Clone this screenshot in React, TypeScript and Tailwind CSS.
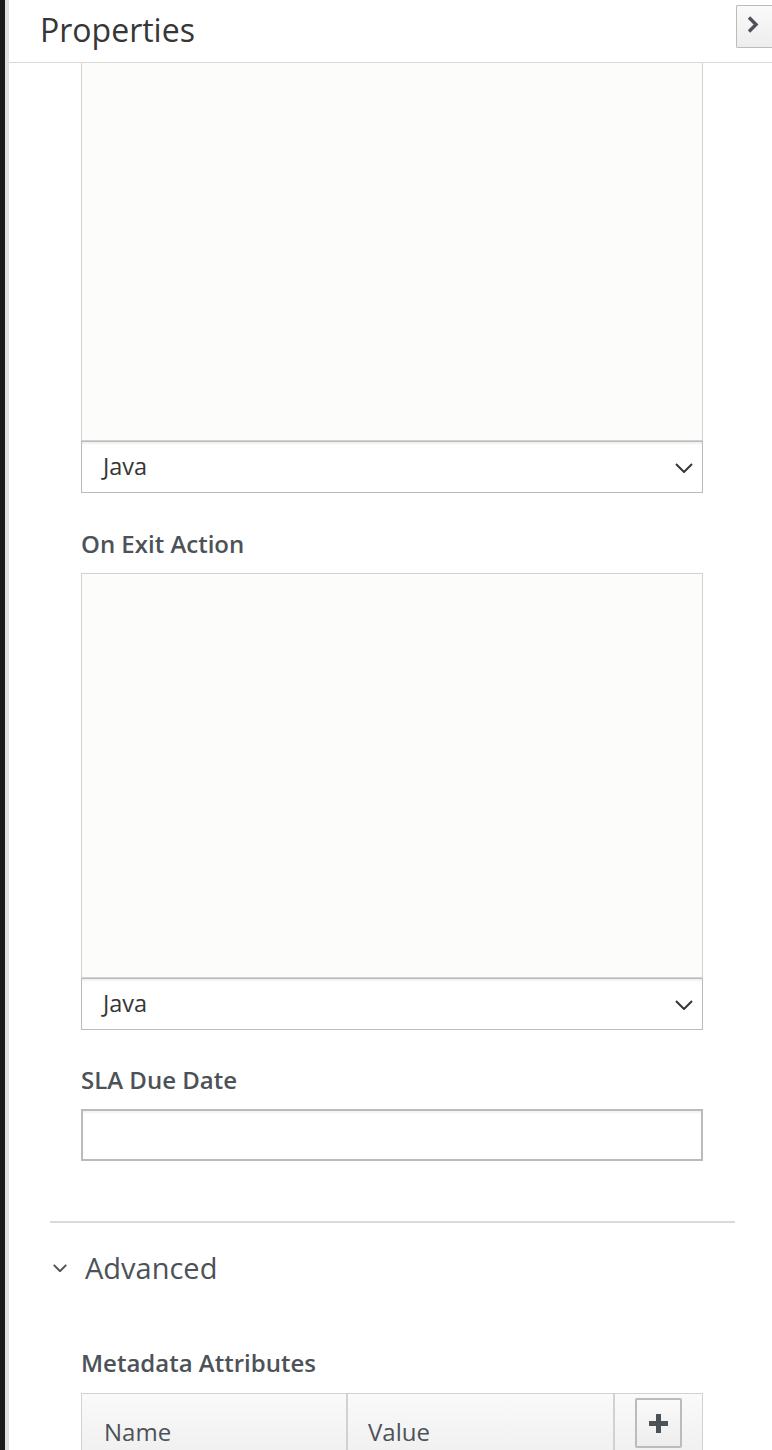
import React from 'react';

const Chevron = ({ className, width = 1.8 }: { className?: string; width?: number }) => (
  <svg viewBox="0 0 18 10" className={className} fill="none" stroke="currentColor" strokeWidth={width}>
    <path d="M1 1l8 8 8-8" />
  </svg>
);

const Label = ({ children, className = '' }: { children: React.ReactNode; className?: string }) => (
  <div className={`text-[24px] leading-[28px] font-semibold text-[#4d5258] ${className}`}>{children}</div>
);

const LangSelect = () => (
  <div className="relative flex h-[52px] w-[622px] items-center border border-[#bbbbbb] bg-white pl-[21px] text-[23.5px] text-[#363636] shadow-[inset_0_2px_2px_rgba(0,0,0,0.06)]">
    Java
    <Chevron className="absolute right-[9px] top-[21px] h-[10px] w-[18px] text-[#363636]" width={2} />
  </div>
);

const App: React.FC = () => {
  return (
    <div className="flex min-h-[1450px] w-[772px] overflow-hidden bg-white font-['Open_Sans',sans-serif]">
      <div className="w-[5px] shrink-0 bg-[#1b1b1b]" />
      <div className="w-[4px] shrink-0 bg-[#e0e0e0]" />
      <div className="flex flex-1 flex-col">
        {/* header */}
        <div className="flex h-[63px] items-start justify-between border-b border-[#d9d9d9]">
          <h1 className="pl-[31px] pt-[9px] text-[32px] leading-[42px] text-[#363636]">Properties</h1>
          <button className="mt-[5px] flex h-[43px] w-[36px] items-start justify-center rounded-l-[2px] border border-r-0 border-[#bbbbbb] bg-gradient-to-b from-[#fafafa] to-[#ededed] pr-[4px] pt-[9px] text-[#4d5258]">
            <svg viewBox="0 0 13 19" className="h-[19px] w-[13px]" fill="none" stroke="currentColor" strokeWidth={3.4}>
              <path d="M3 2.5l7 7-7 7" />
            </svg>
          </button>
        </div>

        <div className="flex flex-col pl-[72px]">
          <div className="h-[378px] w-[622px] border-x border-b border-[#d1d1d1] bg-[#fcfcfa]" />
          <LangSelect />

          <Label className="mt-[37px]">On Exit Action</Label>
          <div className="mt-[15px] h-[405px] w-[622px] border border-[#d1d1d1] bg-[#fcfcfa]" />
          <LangSelect />

          <Label className="mt-[36px]">SLA Due Date</Label>
          <div className="mt-[15px] h-[52px] w-[622px] border-2 border-[#bbbbbb] bg-white shadow-[inset_0_2px_2px_rgba(0,0,0,0.05)]" />
        </div>

        <div className="ml-[41px] mt-[60px] w-[685px] border-t-2 border-[#d9d9d9]" />

        <div className="mt-[25px] flex items-center pl-[44px] text-[#4d5258]">
          <Chevron className="h-[8px] w-[14px]" width={2.6} />
          <span className="ml-[18px] text-[29px] leading-[40px]">Advanced</span>
        </div>

        <div className="flex flex-col pl-[72px]">
          <Label className="mt-[61px]">Metadata Attributes</Label>
          <div className="mt-[16px] grid h-[80px] w-[622px] grid-cols-[266px_267px_87px] border border-[#d1d1d1] bg-gradient-to-b from-[#fafafa] to-[#ededed] text-[24px] text-[#4d5258]">
            <div className="border-r-2 border-[#d1d1d1] pl-[22px] pt-[20px]">Name</div>
            <div className="border-r-2 border-[#d1d1d1] pl-[20px] pt-[20px]">Value</div>
            <div className="flex justify-center pt-[4px]">
              <button className="flex h-[50px] w-[47px] items-start justify-center rounded-[2px] border-2 border-[#bbbbbb] bg-gradient-to-b from-[#fafafa] to-[#ededed] pt-[14px]">
                <svg viewBox="0 0 19 19" className="h-[19px] w-[19px]" fill="none" stroke="#4d5258" strokeWidth={5}>
                  <path d="M9.5 0v19M0 9.5h19" />
                </svg>
              </button>
            </div>
          </div>
        </div>
      </div>
    </div>
  );
};

export default App;
